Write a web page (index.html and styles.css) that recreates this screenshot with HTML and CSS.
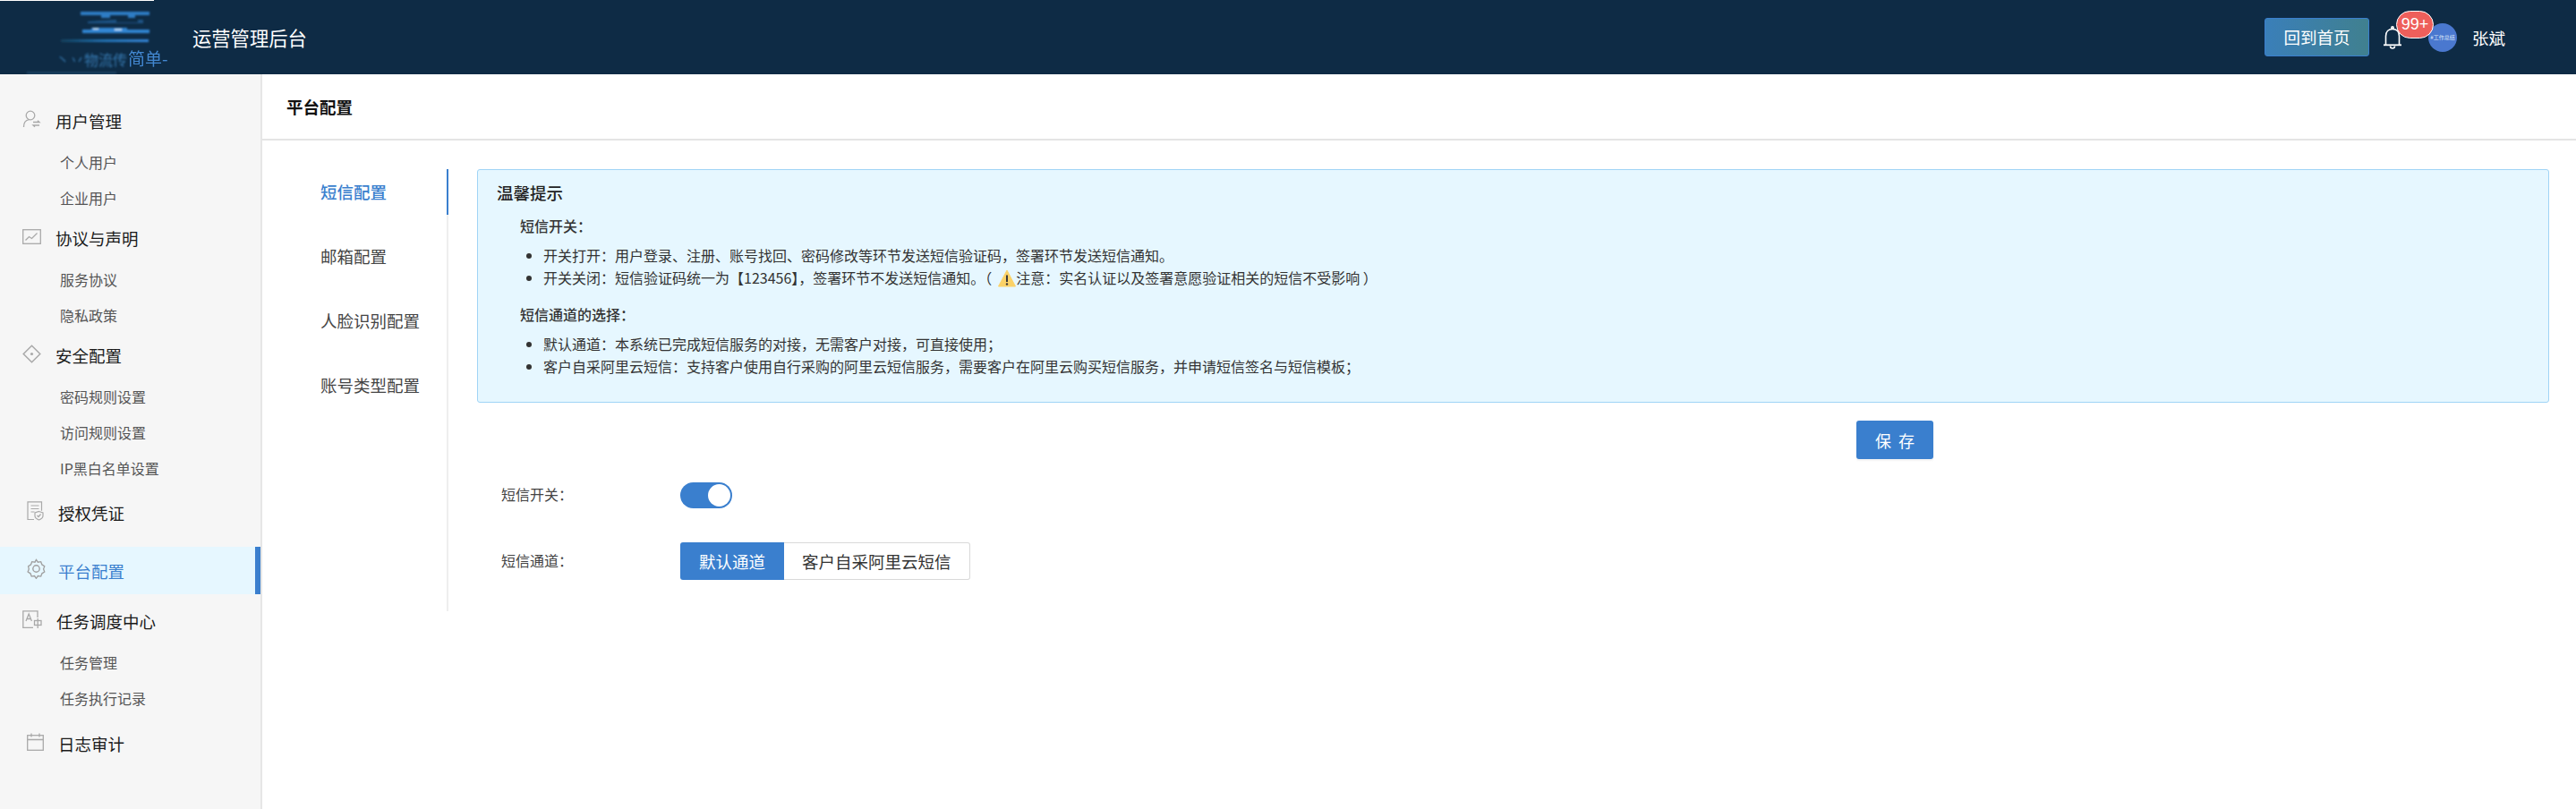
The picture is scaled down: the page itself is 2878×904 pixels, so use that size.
FILE: index.html
```html
<!DOCTYPE html>
<html lang="zh-CN">
<head>
<meta charset="utf-8">
<title>运营管理后台</title>
<link rel="stylesheet" href="styles.css">
</head>
<body>
<header class="topbar">
  <svg class="logo" width="200" height="83" viewBox="0 0 200 83">
    <defs>
      <linearGradient id="lg" x1="0" x2="1" y1="0" y2="0">
        <stop offset="0" stop-color="#12405c"/>
        <stop offset="0.5" stop-color="#2473b5"/>
        <stop offset="1" stop-color="#3587da"/>
      </linearGradient>
      <filter id="bl"><feGaussianBlur stdDeviation="0.8"/></filter>
      <filter id="bl2"><feGaussianBlur stdDeviation="0.4"/></filter>
    </defs>
    <rect x="0" y="0" width="172" height="1" fill="#ffffff"/>
    <g filter="url(#bl)">
      <path d="M90 13h77v4h-16v3h-8v-3h-20v3h-10v-3H90z" fill="#2f7cc4"/>
      <path d="M98 24l32-2v3h24v-3h6v4h-62z" fill="#1b5384"/>
      <path d="M92 33h10v-2h40v2h25v4h-75z" fill="#3285d2"/>
      <rect x="104" y="31" width="6" height="2" fill="#b8dcf5"/>
      <rect x="128" y="32" width="8" height="2" fill="#b8dcf5"/>
      <rect x="68" y="44" width="98" height="3" fill="url(#lg)"/>
      <rect x="30" y="80" width="100" height="3" fill="#1a4160"/>
    </g>
    <text class="logo-text blurred" x="62" y="73" filter="url(#bl)">丶丷物流传</text>
    <text class="logo-text" x="143" y="73" filter="url(#bl2)">简单-</text>
  </svg>
  <div class="brand">运营管理后台</div>
  <div class="top-right">
    <button class="home-btn">回到首页</button>
    <div class="bell">
      <svg width="20" height="26" viewBox="0 0 20 26" fill="none" stroke="#fff" stroke-width="1.6">
        <path d="M2.5 21V11.5C2.5 6.5 5.5 3.500 10 3.500s7.500 3 7.500 8V21"/>
        <path d="M0 21.300h20" stroke-width="1.800"/>
        <circle cx="10" cy="2" r="1.200"/>
        <path d="M7.500 22.500a2.500 2.500 0 0 0 5 0"/>
      </svg>
      <span class="badge">99+</span>
    </div>
    <div class="avatar">#工作总结</div>
    <div class="username">张斌</div>
  </div>
</header>

<div class="layout">
  <aside class="sidebar">
    <div class="menu-head">
      <svg class="ico" width="21" height="21" viewBox="0 0 21 21" fill="none" stroke="#a9a9a9" stroke-width="1.300">
        <circle cx="9" cy="6" r="4.800"/>
        <path d="M1.500 19c0-5 2.500-7.800 6-8.300"/>
        <path d="M12 13.500h7l-2-1.800M19 17h-7l2 1.800"/>
      </svg>
      <span>用户管理</span>
    </div>
    <a class="menu-sub">个人用户</a>
    <a class="menu-sub">企业用户</a>

    <div class="menu-head">
      <svg class="ico" width="21" height="21" viewBox="0 0 21 21" fill="none" stroke="#a9a9a9" stroke-width="1.300">
        <rect x="0.700" y="2.700" width="19.600" height="15.600"/>
        <path d="M3.500 14.500l4-4 3 2 6-6"/>
      </svg>
      <span>协议与声明</span>
    </div>
    <a class="menu-sub">服务协议</a>
    <a class="menu-sub">隐私政策</a>

    <div class="menu-head">
      <svg class="ico" width="21" height="21" viewBox="0 0 21 21" fill="none" stroke="#a9a9a9" stroke-width="1.500">
        <path d="M10.500 1.200l9.300 9.300-9.300 9.300-9.300-9.300z"/>
        <circle cx="10.500" cy="10.500" r="1.600" fill="#a9a9a9" stroke="none"/>
      </svg>
      <span>安全配置</span>
    </div>
    <a class="menu-sub">密码规则设置</a>
    <a class="menu-sub">访问规则设置</a>
    <a class="menu-sub">IP黑白名单设置</a>

    <div class="menu-head solo license">
      <svg class="ico" width="19" height="22" viewBox="0 0 19 22" fill="none" stroke="#a9a9a9" stroke-width="1.200">
        <path d="M8 20.500H1V0.800h15.500v10"/>
        <path d="M4.500 5h9M4.500 8.500h9M4.500 12h4"/>
        <path d="M13.500 11.500l4.500 1.500v3.500c0 2-2 3.500-4.500 4.500-2.500-1-4.500-2.500-4.500-4.500V13z"/>
        <path d="M11.500 16l1.500 1.500 2.500-3"/>
      </svg>
      <span>授权凭证</span>
    </div>

    <div class="menu-head solo active">
      <svg class="ico" width="21" height="23" viewBox="0 0 21 23" fill="none" stroke="#a0a0a0" stroke-width="1.400">
        <path d="M10.500 1l2 2.900 3.500-.5 1.300 3.400 3 1.900-1.200 3.300 1.200 3.300-3 1.900-1.300 3.400-3.500-.5-2 2.900-2-2.900-3.500.5-1.300-3.400-3-1.900 1.200-3.300L1.200 8.700l3-1.900L5.500 3.400 9 3.900z" transform="scale(.95) translate(.5 .5)"/>
        <circle cx="10.500" cy="11.500" r="3.700"/>
      </svg>
      <span>平台配置</span>
    </div>

    <div class="menu-head task">
      <svg class="ico" width="22" height="21" viewBox="0 0 22 21" fill="none" stroke="#a9a9a9" stroke-width="1.300">
        <path d="M17 8V0.800H0.800v18.600H12"/>
        <path d="M4 12l3.200-8 3.200 8M5.200 9.500h4"/>
        <rect x="13.500" y="11.500" width="7.500" height="5"/>
        <path d="M17.200 9v11"/>
      </svg>
      <span>任务调度中心</span>
    </div>
    <a class="menu-sub">任务管理</a>
    <a class="menu-sub">任务执行记录</a>

    <div class="menu-head solo log">
      <svg class="ico" width="19" height="20" viewBox="0 0 19 20" fill="none" stroke="#a9a9a9" stroke-width="1.300">
        <rect x="0.700" y="2.700" width="17.600" height="16.600"/>
        <path d="M0.700 7.500h17.600M5 0.500v4M14 0.500v4"/>
      </svg>
      <span>日志审计</span>
    </div>
  </aside>

  <main class="main">
    <div class="page-title">平台配置</div>
    <div class="page-body">
      <nav class="tabs">
        <a class="tab current">短信配置</a>
        <a class="tab">邮箱配置</a>
        <a class="tab">人脸识别配置</a>
        <a class="tab">账号类型配置</a>
      </nav>
      <section class="panel">
        <div class="notice">
          <div class="notice-title">温馨提示</div>
          <div class="notice-sub">短信开关：</div>
          <ul class="notice-list">
            <li>开关打开：用户登录、注册、账号找回、密码修改等环节发送短信验证码，签署环节发送短信通知。</li>
            <li>开关关闭：短信验证码统一为【123456】，签署环节不发送短信通知。（<svg class="warn" width="20" height="20" viewBox="0 0 20 20"><path d="M10 1L19.500 19H.5z" fill="#fbd267" stroke="#fbd267" stroke-linejoin="round"/><path d="M10 6.500v7.500" stroke="#3a3a3a" stroke-width="2"/><circle cx="10" cy="16.500" r="1.200" fill="#3a3a3a"/></svg>注意：实名认证以及签署意愿验证相关的短信不受影响 ）</li>
          </ul>
          <div class="notice-sub second">短信通道的选择：</div>
          <ul class="notice-list">
            <li>默认通道：本系统已完成短信服务的对接，无需客户对接，可直接使用；</li>
            <li>客户自采阿里云短信：支持客户使用自行采购的阿里云短信服务，需要客户在阿里云购买短信服务，并申请短信签名与短信模板；</li>
          </ul>
        </div>
        <div class="save-row"><button class="save-btn">保 存</button></div>
        <div class="form-row switch-row">
          <label class="form-label">短信开关：</label>
          <span class="switch"><span class="knob"></span></span>
        </div>
        <div class="form-row channel-row">
          <label class="form-label">短信通道：</label>
          <div class="segment">
            <span class="seg seg-on">默认通道</span>
            <span class="seg">客户自采阿里云短信</span>
          </div>
        </div>
      </section>
    </div>
  </main>
</div>
</body>
</html>
```

FILE: styles.css
```css
* { box-sizing: border-box; }
html, body { margin: 0; padding: 0; }
body {
  width: 2878px;
  height: 904px;
  overflow: hidden;
  background: #fff;
  font-family: "Noto Sans CJK SC", "Liberation Sans", sans-serif;
  color: #333;
}
.topbar {
  height: 83px;
  background: #0e2b45;
  display: flex;
  align-items: center;
}
.logo { flex: none; width: 200px; height: 83px; margin-right: 15px; }
.logo-text { font-family: "Noto Sans CJK SC", sans-serif; font-size: 19px; fill: #4287d0; }
.logo-text.blurred { font-size: 16px; fill: #3576ad; }
.brand { color: #fff; font-size: 21.300px; line-height: 30px; }
.top-right { margin-left: auto; display: flex; align-items: center; padding-right: 79px; }
.home-btn {
  width: 117px;
  height: 43px;
  padding: 0;
  border: 1px solid #3a7fce;
  border-radius: 3px;
  background: linear-gradient(90deg, #3a7fb9, #40808f);
  color: #fff;
  font: 18.500px/1 "Noto Sans CJK SC", sans-serif;
}
.bell { position: relative; margin-left: 16px; width: 20px; height: 26px; display: flex; }
.badge {
  position: absolute;
  left: 14px;
  top: -17px;
  z-index: 2;
  width: 42px;
  height: 31px;
  border: 1px solid #fff;
  border-radius: 16px;
  background: #ee5f5b;
  color: #fff;
  font: 18px/29px "Liberation Sans", sans-serif;
  text-align: center;
}
.avatar {
  margin-left: 30px;
  width: 32px;
  height: 32px;
  border-radius: 50%;
  background: #4a78cf;
  color: #d6e2f6;
  font-size: 6px;
  line-height: 32px;
  text-align: center;
  white-space: nowrap;
  overflow: hidden;
}
.username { margin-left: 17px; color: #fff; font-size: 18.500px; line-height: 26px; }

.layout { display: flex; height: 821px; }
.sidebar {
  flex: none;
  width: 293px;
  padding-top: 27px;
  background: #f6f6f6;
  border-right: 2px solid #e6e6e6;
}
.menu-head {
  height: 50px;
  padding-left: 25px;
  display: flex;
  align-items: center;
  gap: 16px;
  color: #1a1a1a;
  font-size: 18.500px;
  line-height: 26px;
}
.menu-head .ico { flex: none; margin-bottom: 4px; }
.menu-sub {
  display: block;
  height: 40px;
  margin-top: 1px;
  margin-bottom: -1px;
  padding-left: 67px;
  color: #555;
  font-size: 16px;
  line-height: 40px;
}
.menu-sub + .menu-head { margin-top: 1px; }
.menu-head.solo { padding-left: 30px; }
.license { margin-top: 6px; }
.menu-head.active {
  height: 53px;
  margin-top: 13px;
  width: 291px;
  gap: 14px;
  background: #e6f7ff;
  border-right: 6px solid #3a7fce;
  color: #3a7fce;
}
.menu-head.task { margin-top: 5px; }
.menu-sub + .menu-head.log { margin-top: 7px; }
.menu-sub + .menu-head.license { margin-top: 6px; }

.main { flex: 1; min-width: 0; }
.page-title {
  height: 74px;
  padding: 0 0 0 27px;
  border-bottom: 2px solid #e4e4e4;
  font-size: 18.500px;
  font-weight: 700;
  color: #111;
  line-height: 73px;
}
.page-body {
  display: flex;
  padding: 32px 30px 0 0;
}
.tabs {
  flex: none;
  width: 208px;
  height: 494px;
  border-right: 2px solid #eeeeee;
  display: flex;
  flex-direction: column;
  gap: 21px;
}
.tab {
  display: block;
  height: 51px;
  margin-right: -2px;
  padding-left: 65px;
  border-right: 2px solid transparent;
  color: #444;
  font-size: 18.500px;
  line-height: 51px;
}
.tab.current { color: #3a7fce; font-weight: 500; border-right-color: #3a7fce; }
.panel { flex: 1; min-width: 0; margin-left: 32px; }
.notice {
  height: 261px;
  padding: 12px 20px 0 21px;
  background: #e6f7ff;
  border: 1px solid #a0d4f6;
  border-radius: 3px;
  color: #333;
  font-size: 16px;
  line-height: 25px;
}
.notice-title { font-size: 18.500px; font-weight: 500; line-height: 26px; color: #222; }
.notice-sub { margin: 12px 0 0 26px; font-weight: 500; }
.notice-sub.second { margin-top: 16px; }
.notice-list { margin: 8px 0 0 26px; padding: 0 0 0 26px; }
.warn { margin-left: 7px; vertical-align: -4px; }
.save-row { margin-top: 20px; height: 43px; padding-left: 1541px; }
.save-btn {
  width: 86px;
  height: 43px;
  padding: 0;
  border: 0;
  border-radius: 3px;
  background: #3a7fce;
  color: #fff;
  font: 18px/1 "Noto Sans CJK SC", sans-serif;
  word-spacing: 4px;
  box-shadow: 0 2px 2px rgba(0, 0, 0, .05);
}
.form-row { display: flex; align-items: center; padding-left: 27px; }
.switch-row { height: 40px; margin-top: 20px; }
.channel-row { height: 42px; margin-top: 33px; }
.form-label { flex: none; width: 200px; padding-bottom: 2px; color: #444; font-size: 16px; line-height: 24px; }
.switch {
  width: 58px;
  height: 29px;
  padding: 2px 2px 2px 0;
  border-radius: 15px;
  background: #3a7fce;
  display: flex;
  justify-content: flex-end;
}
.knob { width: 25px; height: 25px; border-radius: 50%; background: #fff; }
.segment { display: flex; height: 42px; }
.seg {
  height: 42px;
  padding: 0 20px;
  border: 1px solid #d9d9d9;
  border-left: 0;
  border-radius: 0 3px 3px 0;
  color: #333;
  font-size: 18.500px;
  line-height: 40px;
  white-space: nowrap;
}
.seg-on {
  width: 116px;
  padding: 0;
  text-align: center;
  border: 0;
  border-radius: 3px 0 0 3px;
  background: #3a7fce;
  color: #fff;
  line-height: 42px;
}
```
